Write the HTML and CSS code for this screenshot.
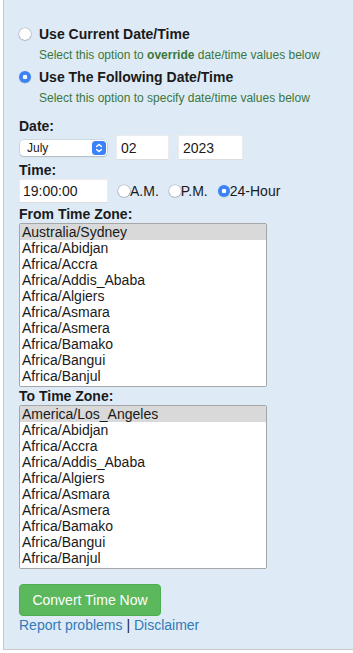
FILE: index.html
```html
<!DOCTYPE html>
<html lang="en">
<head>
    <meta charset="UTF-8" />
    <meta name="viewport" content="width=device-width, initial-scale=1.0"/>
    <title>Time Zone Converter</title>
    <link rel="stylesheet" href="styles.css">
</head>
<body>

<div class="panel">
    <form class="converter" id="converterForm">
        <label class="choice">
            <input type="radio" name="mode" value="current" class="radio" />
            Use Current Date/Time
        </label>
        <p class="hint">Select this option to <b>override</b> date/time values below</p>

        <label class="choice">
            <input type="radio" name="mode" value="custom" class="radio" checked />
            Use The Following Date/Time
        </label>
        <p class="hint last">Select this option to specify date/time values below</p>

        <div class="field-label">Date:</div>
        <div class="date-row">
            <span class="month-wrap">
                <select class="month" name="month">
                    <option>January</option>
                    <option>February</option>
                    <option>March</option>
                    <option>April</option>
                    <option>May</option>
                    <option>June</option>
                    <option selected>July</option>
                    <option>August</option>
                    <option>September</option>
                    <option>October</option>
                    <option>November</option>
                    <option>December</option>
                </select>
                <svg class="stepper" width="14" height="14" viewBox="0 0 14 14">
                    <rect width="14" height="14" rx="3.5" fill="#3b82f6"/>
                    <path d="M4.6 5.6 L7 3.4 L9.4 5.6 M4.6 8.4 L7 10.6 L9.4 8.4" fill="none" stroke="#fff" stroke-width="1.4" stroke-linecap="round" stroke-linejoin="round"/>
                </svg>
            </span>
            <input type="text" class="text-input day" name="day" value="02" />
            <input type="text" class="text-input year" name="year" value="2023" />
        </div>

        <div class="field-label">Time:</div>
        <div class="time-row">
            <input type="text" class="text-input time" name="time" value="19:00:00" />
            <label class="ampm"><input type="radio" name="clock" class="radio" />A.M.</label>
            <label class="ampm"><input type="radio" name="clock" class="radio" />P.M.</label>
            <label class="ampm"><input type="radio" name="clock" class="radio" checked />24-Hour</label>
        </div>

        <div class="field-label gap">From Time Zone:</div>
        <select class="zone-list" name="from" size="10">
            <option selected>Australia/Sydney</option>
            <option>Africa/Abidjan</option>
            <option>Africa/Accra</option>
            <option>Africa/Addis_Ababa</option>
            <option>Africa/Algiers</option>
            <option>Africa/Asmara</option>
            <option>Africa/Asmera</option>
            <option>Africa/Bamako</option>
            <option>Africa/Bangui</option>
            <option>Africa/Banjul</option>
            <option>Africa/Bissau</option>
            <option>Africa/Blantyre</option>
        </select>

        <div class="field-label">To Time Zone:</div>
        <select class="zone-list" name="to" size="10">
            <option selected>America/Los_Angeles</option>
            <option>Africa/Abidjan</option>
            <option>Africa/Accra</option>
            <option>Africa/Addis_Ababa</option>
            <option>Africa/Algiers</option>
            <option>Africa/Asmara</option>
            <option>Africa/Asmera</option>
            <option>Africa/Bamako</option>
            <option>Africa/Bangui</option>
            <option>Africa/Banjul</option>
            <option>Africa/Bissau</option>
            <option>Africa/Blantyre</option>
        </select>

        <button type="submit" class="convert">Convert Time Now</button>
        <div class="links"><a href="#">Report problems</a> | <a href="#">Disclaimer</a></div>
    </form>
</div>

</body>
</html>
```

FILE: styles.css
```css
* {
    box-sizing: border-box;
}

body {
    margin: 0;
    background-color: #ffffff;
    font-family: "Liberation Sans", Arial, Helvetica, sans-serif;
    color: #1a1a1a;
    overflow: hidden;
}

.panel {
    margin-left: 3px;
    background-color: #deebf6;
    border-left: 1px solid #c8c8c8;
    border-bottom: 1px solid #c8c8c8;
    padding: 24px 15px 15px;
}

.converter {
    margin: 0;
}

.choice {
    display: flex;
    align-items: center;
    height: 20px;
    font-size: 14px;
    font-weight: bold;
}

.radio {
    appearance: none;
    width: 12px;
    height: 12px;
    margin: 0 8px 0 0;
    border-radius: 50%;
    background: #ffffff;
    box-shadow: 0 0 0 0.6px rgba(0, 0, 0, 0.22), 0 0.6px 1.2px rgba(0, 0, 0, 0.18);
    flex-shrink: 0;
}

.radio:checked {
    background: radial-gradient(circle, #ffffff 0 2px, #3b82f6 2.6px);
    box-shadow: 0 0.6px 1.2px rgba(0, 0, 0, 0.2);
}

.hint {
    margin: 3px 0 4px;
    padding-left: 20px;
    font-size: 12px;
    line-height: 16px;
    color: #3c763d;
}

.hint.last {
    margin-bottom: 11px;
}

.field-label {
    font-size: 14px;
    font-weight: bold;
    line-height: 18px;
}

.field-label.gap {
    margin-top: 2px;
}

.date-row {
    display: flex;
    align-items: center;
    gap: 9px;
    height: 25px;
    margin-bottom: 1px;
}

.month-wrap {
    position: relative;
    display: inline-block;
    margin-left: 1px;
}

.month {
    appearance: none;
    display: block;
    width: 87px;
    height: 16px;
    padding: 0 0 0 7px;
    border: none;
    border-radius: 4px;
    background: #ffffff;
    box-shadow: 0 0 0 0.5px rgba(0, 0, 0, 0.15), 0 1px 1.5px rgba(0, 0, 0, 0.15);
    font-family: inherit;
    font-size: 12px;
    color: #1a1a1a;
}

.stepper {
    position: absolute;
    right: 1px;
    top: 1px;
    pointer-events: none;
}

.text-input {
    height: 25px;
    padding: 0 4px;
    border: 1px solid #ececec;
    border-bottom-color: #dcdcdc;
    background: #ffffff;
    font-family: inherit;
    font-size: 14px;
    color: #1a1a1a;
}

.day {
    width: 53px;
}

.year {
    width: 65px;
}

.time-row {
    display: flex;
    align-items: center;
    gap: 10px;
    height: 24px;
}

.time {
    width: 89px;
    height: 24px;
    padding-left: 3px;
}

.ampm {
    display: flex;
    align-items: center;
    font-size: 14px;
}

.ampm .radio {
    margin-right: 0;
}

.zone-list {
    display: block;
    width: 248px;
    height: 164px;
    padding: 0;
    border: 1px solid #a6a6a6;
    background: #ffffff;
    font-family: inherit;
    font-size: 14px;
    color: #1a1a1a;
    scrollbar-width: none;
    outline: none;
}

.zone-list option {
    padding: 0 2px;
    line-height: 16.2px;
    min-height: 0;
}

.zone-list option:checked {
    background: linear-gradient(#d9d9d9, #d9d9d9);
    color: #1a1a1a;
}

.convert {
    display: block;
    width: 142px;
    height: 32px;
    margin-top: 15px;
    padding: 0;
    background-color: #5cb85c;
    border: 1px solid #4cae4c;
    border-radius: 4px;
    color: #ffffff;
    font-family: inherit;
    font-size: 14px;
    cursor: pointer;
}

.links {
    font-size: 14px;
    line-height: 18px;
    color: #222;
}

.links a {
    color: #337ab7;
    text-decoration: none;
}
```
